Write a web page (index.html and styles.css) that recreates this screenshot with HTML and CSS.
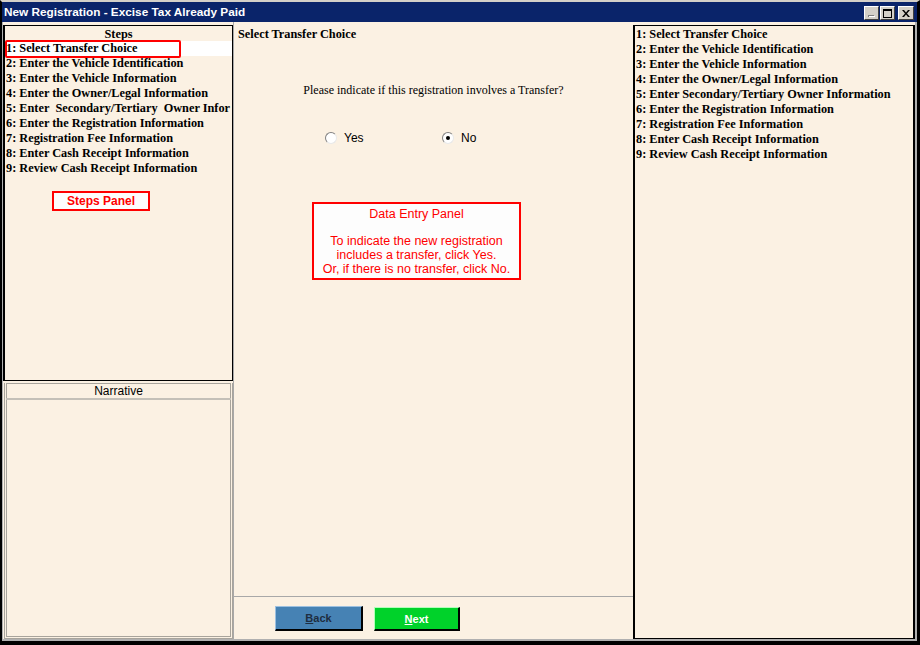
FILE: index.html
```html
<!DOCTYPE html>
<html lang="en">
<head>
  <meta charset="UTF-8">
  <title>New Registration - Excise Tax Already Paid</title>
  <link rel="stylesheet" href="styles.css">
</head>
<body>
  <div class="window">
    <div class="title-bar">
      <span class="title-text">New Registration - Excise Tax Already Paid</span>
      <div class="title-buttons">
        <span class="tb-btn tb-min">
          <svg width="8" height="8" viewBox="0 0 8 8"><rect x="0" y="6" width="6" height="2" fill="#808080"/><rect x="1" y="7" width="6" height="1" fill="#fff"/></svg>
        </span>
        <span class="tb-btn">
          <svg width="9" height="9" viewBox="0 0 9 9"><rect x="0.5" y="0.5" width="8" height="8" fill="none" stroke="#000"/><rect x="0" y="0" width="9" height="2" fill="#000"/></svg>
        </span>
        <span class="tb-btn tb-close">
          <svg width="8" height="7" viewBox="0 0 8 7"><path d="M0 0h2l2 2.5 2-2.5h2l-3 3.5 3 3.5h-2l-2-2.5-2 2.5h-2l3-3.5z" fill="#000"/></svg>
        </span>
      </div>
    </div>

    <div class="content">
      <div class="left-col">
        <div class="steps-panel">
          <div class="steps-head">Steps</div>
          <ul class="step-list">
            <li class="current"><span class="focus-ring"></span>1: Select Transfer Choice</li>
            <li>2: Enter the Vehicle Identification</li>
            <li>3: Enter the Vehicle Information</li>
            <li>4: Enter the Owner/Legal Information</li>
            <li>5: Enter&nbsp; Secondary/Tertiary&nbsp; Owner Infor</li>
            <li>6: Enter the Registration Information</li>
            <li>7: Registration Fee Information</li>
            <li>8: Enter Cash Receipt Information</li>
            <li>9: Review Cash Receipt Information</li>
          </ul>
          <div class="callout callout-steps">Steps Panel</div>
        </div>
        <div class="narrative">
          <div class="narrative-head">Narrative</div>
        </div>
      </div>

      <div class="center-col">
        <div class="entry">
          <div class="entry-title">Select Transfer Choice</div>
          <div class="question">Please indicate if this registration involves a Transfer?</div>
          <div class="radio-row">
            <label class="radio"><span class="radio-dot"></span>Yes</label>
            <label class="radio"><span class="radio-dot checked"></span>No</label>
          </div>
          <div class="callout callout-entry">
            <div>Data Entry Panel</div>
            <div class="callout-gap"></div>
            <div>To indicate the new registration</div>
            <div>includes a transfer, click Yes.</div>
            <div>Or, if there is no transfer, click No.</div>
          </div>
        </div>
        <div class="button-bar">
          <button class="btn btn-back"><u>B</u>ack</button>
          <button class="btn btn-next"><u>N</u>ext</button>
        </div>
      </div>

      <div class="right-col">
        <ul class="step-list">
          <li>1: Select Transfer Choice</li>
          <li>2: Enter the Vehicle Identification</li>
          <li>3: Enter the Vehicle Information</li>
          <li>4: Enter the Owner/Legal Information</li>
          <li>5: Enter Secondary/Tertiary Owner Information</li>
          <li>6: Enter the Registration Information</li>
          <li>7: Registration Fee Information</li>
          <li>8: Enter Cash Receipt Information</li>
          <li>9: Review Cash Receipt Information</li>
        </ul>
      </div>
    </div>
  </div>
</body>
</html>
```

FILE: styles.css
```css
body {
  margin: 0;
  background: #fff;
  font-family: "Liberation Serif", serif;
}

.window {
  width: 920px;
  height: 645px;
  box-sizing: border-box;
  border: 2px solid #000;
  border-top: 2px solid #d4d0c8;
  border-right-width: 3px;
  border-bottom-width: 4px;
  background: #fbf1e3;
  display: flex;
  flex-direction: column;
}

.title-bar {
  height: 20px;
  background: #0a246a;
  display: flex;
  align-items: center;
  justify-content: space-between;
  padding: 0 3px 0 2px;
}

.title-text {
  color: #fff;
  font-family: "Liberation Sans", sans-serif;
  font-weight: bold;
  font-size: 11.8px;
}

.title-buttons {
  display: flex;
  gap: 1px;
  margin-top: 2px;
}

.tb-btn {
  width: 15px;
  height: 14px;
  box-sizing: border-box;
  background: #d4d0c8;
  border: 1px solid;
  border-color: #fff #404040 #404040 #fff;
  display: flex;
  align-items: center;
  justify-content: center;
}

.tb-close {
  margin-left: 2px;
  width: 16px;
}

.content {
  flex: 1;
  display: flex;
  border-left: 1px solid #b0b0b0;
  border-right: 2px solid #b0b0b0;
  border-bottom: 2px solid #b0b0b0;
  min-height: 0;
}

.left-col {
  width: 230px;
  display: flex;
  flex-direction: column;
  padding-top: 3px;
}

.steps-panel {
  height: 356px;
  box-sizing: border-box;
  border: 1px solid #000;
  border-left-width: 2px;
}

.steps-head {
  text-align: center;
  font-weight: bold;
  font-size: 12.3px;
  line-height: 15px;
  padding-top: 1px;
  margin-bottom: -1px;
}

.step-list {
  list-style: none;
  margin: 0;
  padding: 0;
  font-weight: bold;
  font-size: 12.3px;
  line-height: 15px;
  white-space: nowrap;
}

.step-list li {
  padding-left: 1px;
}

.step-list li.current {
  position: relative;
  background: #fff;
}

.focus-ring {
  position: absolute;
  left: 0;
  top: -1px;
  width: 176px;
  height: 18px;
  box-sizing: border-box;
  border: 2px solid #f00;
  border-radius: 2px;
}

.callout {
  box-sizing: border-box;
  border: 2px solid #f00;
  background: #fdfdfd;
  color: #f00;
  font-family: "Liberation Sans", sans-serif;
  text-align: center;
}

.callout-steps {
  width: 98px;
  height: 20px;
  margin: 15px 0 0 47px;
  font-weight: bold;
  font-size: 12px;
  line-height: 16px;
}

.narrative {
  flex: 1;
  margin-top: 2px;
  margin-left: 1px;
  border: 3px double #a8a49c;
  border-top: 0;
}

.narrative-head {
  border-top: 1px solid #a8a49c;
  border-bottom: 2px solid #c4c0b8;
  margin: 0 -1px;
  text-align: center;
  font-family: "Liberation Sans", sans-serif;
  font-size: 12px;
  line-height: 13px;
  padding-top: 1px;
}

.center-col {
  width: 399px;
  display: flex;
  flex-direction: column;
  border-left: 1px solid #a8a8a8;
}

.entry {
  flex: 1;
  padding-top: 5px;
}

.entry-title {
  font-weight: bold;
  font-size: 12.3px;
  line-height: 15px;
  padding-left: 4px;
}

.question {
  margin-top: 41px;
  text-align: center;
  font-size: 12px;
  line-height: 15px;
}

.radio-row {
  margin-top: 33px;
  display: flex;
  padding-left: 91px;
  height: 14px;
  font-family: "Liberation Sans", sans-serif;
  font-size: 12px;
}

.radio {
  display: flex;
  align-items: center;
  gap: 7px;
  width: 117px;
}

.radio-dot {
  width: 12px;
  height: 12px;
  box-sizing: border-box;
  border-radius: 50%;
  border: 1px solid;
  border-color: #808080 #e8e8e8 #e8e8e8 #808080;
  background: #fff;
  display: flex;
  align-items: center;
  justify-content: center;
}

.radio-dot.checked::after {
  content: "";
  width: 4px;
  height: 4px;
  border-radius: 50%;
  background: #000;
}

.callout-entry {
  width: 209px;
  height: 78px;
  margin: 57px 0 0 78px;
  padding-top: 3px;
  font-size: 12.5px;
  line-height: 14px;
}

.callout-gap {
  height: 13px;
}

.button-bar {
  height: 43px;
  box-sizing: border-box;
  border-top: 1px solid #a8a8a8;
  display: flex;
  align-items: flex-start;
  gap: 11px;
  padding: 9px 0 0 41px;
}

.btn {
  height: 25px;
  width: 88px;
  font-family: "Liberation Sans", sans-serif;
  font-weight: bold;
  font-size: 11px;
  border: 1px solid;
  border-color: #9cc0e0 #000 #000 #9cc0e0;
  border-width: 1px 2px 2px 1px;
  cursor: pointer;
}

.btn-back {
  background: #4682b4;
  color: #1e2d40;
}

.btn-next {
  width: 86px;
  height: 24px;
  margin-top: 1px;
  background: #00d22a;
  color: #fff;
  border-color: #b0ffb8 #000 #000 #b0ffb8;
}

.right-col {
  flex: 1;
  margin-top: 3px;
  padding-top: 1px;
  border: 1px solid #000;
  border-left-width: 2px;
  border-right-width: 2px;
}
```
